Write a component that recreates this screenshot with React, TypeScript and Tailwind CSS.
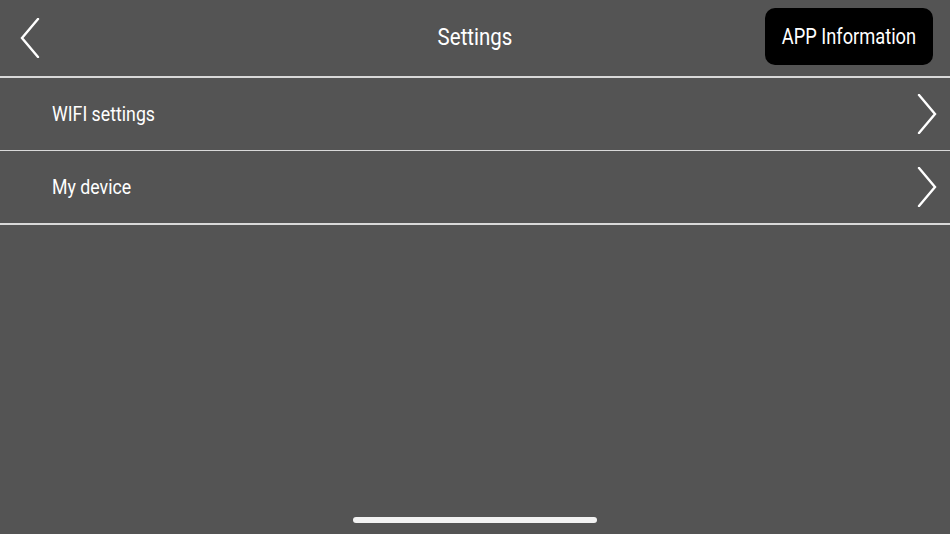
import React from "react";

function Chevron({ dir }: { dir: "left" | "right" }) {
  return (
    <svg width="20" height="40" viewBox="0 0 20 40" fill="none">
      <path
        d={dir === "left" ? "M18 1 L2 20 L18 39" : "M2 1 L18 20 L2 39"}
        stroke="white"
        strokeWidth="2.4"
        strokeLinecap="round"
        strokeLinejoin="miter"
      />
    </svg>
  );
}

function Narrow({ children, className = "" }: { children: React.ReactNode; className?: string }) {
  return (
    <span className={`inline-block whitespace-nowrap ${className}`}>
      {children}
    </span>
  );
}

export default function App() {
  const rows = ["WIFI settings", "My device"];
  return (
    <div
      className="w-[950px] h-[534px] bg-[#545454] text-white flex flex-col overflow-hidden"
      style={{ fontFamily: "Roboto, 'Noto Sans', sans-serif" }}
    >
      <div className="h-[76px] flex items-center justify-between pl-[20px] pr-[17px] relative">
        <Chevron dir="left" />
        <div className="absolute left-0 right-0 top-0 h-[76px] flex items-center justify-center pointer-events-none">
          <Narrow className="text-[23px] scale-x-[0.89] origin-center">Settings</Narrow>
        </div>
        <div className="w-[168px] h-[57px] bg-black rounded-[10px] flex items-center justify-center mt-[-3px]">
          <Narrow className="text-[22px] scale-x-[0.83] origin-center">APP Information</Narrow>
        </div>
      </div>
      <div className="h-[1.5px] bg-[#d9d9d9]" />
      {rows.map((r) => (
        <React.Fragment key={r}>
          <div className="h-[72px] flex items-center justify-between pl-[52px] pr-[13px]">
            <Narrow className="text-[21px] scale-x-[0.845] origin-left mt-[2px]">{r}</Narrow>
            <Chevron dir="right" />
          </div>
          <div className="h-[1.5px] bg-[#d9d9d9]" />
        </React.Fragment>
      ))}
      <div className="flex-1 flex items-end justify-center pb-[11px]">
        <div className="w-[244px] h-[6px] rounded-full bg-[#f2f2f2]" />
      </div>
    </div>
  );
}
